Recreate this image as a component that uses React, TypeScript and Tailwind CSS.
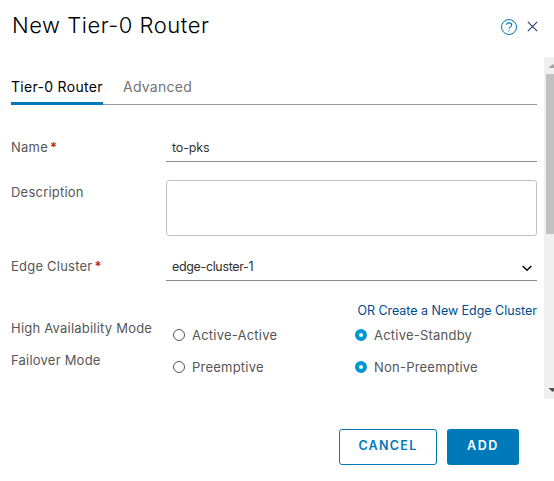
import type { ReactNode } from 'react';

function Label({ children, className = '' }: { children: ReactNode; className?: string }) {
  return <div className={`w-[155px] shrink-0 whitespace-nowrap text-[13px] leading-[19px] tracking-[0.22px] text-[#565656] ${className}`}>{children}</div>;
}

function Star() {
  return <span className="ml-[2px] font-semibold tracking-normal text-[#c92100]">*</span>;
}

function Radio({ checked, label }: { checked?: boolean; label: string }) {
  return (
    <div className="flex h-5 items-center whitespace-nowrap text-[13px] leading-5 text-[#565656]">
      <span className={`mr-[7px] size-3 shrink-0 rounded-full bg-white ${checked ? 'border-4 border-[#0095d3]' : 'border border-[#565656]'}`} />
      <span className="-mt-px tracking-[0.22px]">{label}</span>
    </div>
  );
}

export default function App() {
  return (
    <div className="flex h-[481px] w-[554px] flex-col overflow-hidden bg-white font-['Inter',sans-serif]">
      <header className="flex h-[57px] shrink-0 justify-between pl-3 pr-[15px]">
        <h1 className="pt-[9px] text-[22px] font-light leading-8 tracking-[0.52px] text-black">New Tier-0 Router</h1>
        <div className="flex gap-[9px] pt-[18px]">
          <svg width="18" height="18" viewBox="0 0 18 18" fill="none" stroke="#0079b8">
            <circle cx="9" cy="9" r="7.5" />
            <path d="M6.3 6.6C6.6 5.5 7.7 4.9 9 4.9c1.5 0 2.7.8 2.7 2.1 0 2-2.7 1.7-2.7 3.7M9 12.2v1.3" strokeWidth="1.1" />
          </svg>
          <svg className="mr-px mt-[3px]" width="11" height="11" viewBox="0 0 11 11" stroke="#24366f" strokeWidth="1.1">
            <path d="M.8.8l9.4 9.4M10.2.8L.8 10.2" />
          </svg>
        </div>
      </header>

      <div className="flex h-[342px] shrink-0 pl-[11px]">
        <main className="w-[526px] shrink-0">
          <nav className="flex h-12 items-end border-b border-[#9a9a9a] text-[14px] leading-5">
            <div className="-mb-px h-[28px] w-[92px] whitespace-nowrap border-b-3 border-[#0079b8] tracking-[0.3px] text-black">Tier-0 Router</div>
            <div className="ml-5 h-[27px] tracking-[0.25px] text-[#737373]">Advanced</div>
          </nav>

          <div className="flex h-[57px] pt-[33px]">
            <Label>Name<Star /></Label>
            <div className="h-6 flex-1 border-b border-[#8c8c8c] pl-[6px] text-[12.5px] leading-5 tracking-[-0.15px] text-[#313131]">to-pks</div>
          </div>

          <div className="flex pt-[18px]">
            <Label className="pt-[3px]">Description</Label>
            <div className="h-14 flex-1 rounded-[3px] border border-[#c1c1c1]" />
          </div>

          <div className="flex h-[45px] pt-[21px]">
            <Label>Edge Cluster<Star /></Label>
            <div className="flex h-6 flex-1 justify-between border-b border-[#8c8c8c] pl-[6px] pr-[5px] text-[12.5px] leading-5 tracking-[-0.35px] text-[#313131]">
              <span>edge-cluster-1</span>
              <svg className="mt-[8px]" width="10" height="7" viewBox="0 0 10 7" fill="none" stroke="black" strokeWidth="1.5">
                <path d="M.7 1L5 5.3 9.3 1" />
              </svg>
            </div>
          </div>

          <div className="flex pt-5">
            <div className="w-[155px] shrink-0 pt-[18px]">
              <Label>High Availability Mode</Label>
              <Label className="mt-[13px]">Failover Mode</Label>
            </div>
            <div className="flex-1">
              <div className="h-5 whitespace-nowrap text-right text-[12.5px] leading-5 tracking-[-0.03px] text-[#004a8f]">OR Create a New Edge Cluster</div>
              <div className="mt-1 grid grid-cols-[182px_1fr] gap-y-3 pl-[7px]">
                <Radio label="Active-Active" />
                <Radio label="Active-Standby" checked />
                <Radio label="Preemptive" />
                <Radio label="Non-Preemptive" checked />
              </div>
            </div>
          </div>
        </main>

        <div className="ml-[7px] flex w-[10px] shrink-0 flex-col overflow-hidden bg-[#f0f0f0] pl-[2px]">
          <svg className="mt-[7px] shrink-0" width="8" height="10" viewBox="0 0 8 10">
            <path d="M2.5 4L6.5 0l4 4z" fill="#a3a3a3" />
          </svg>
          <div className="h-[160px] shrink-0 bg-[#c1c1c1]" />
          <svg className="mt-[154px] shrink-0" width="8" height="5" viewBox="0 0 8 5">
            <path d="M2.5 0h8l-4 4z" fill="#505050" />
          </svg>
        </div>
      </div>

      <footer className="flex justify-end gap-[10px] pr-[35px] pt-[30px] text-[12.5px] font-semibold">
        <button className="h-9 w-[98px] rounded-[3px] border border-[#0079b8] pb-[2px] tracking-[1.3px] text-[#0079b8]">CANCEL</button>
        <button className="h-9 w-[72px] rounded-[3px] bg-[#0079b8] pb-[2px] tracking-[1.6px] text-white">ADD</button>
      </footer>
    </div>
  );
}
